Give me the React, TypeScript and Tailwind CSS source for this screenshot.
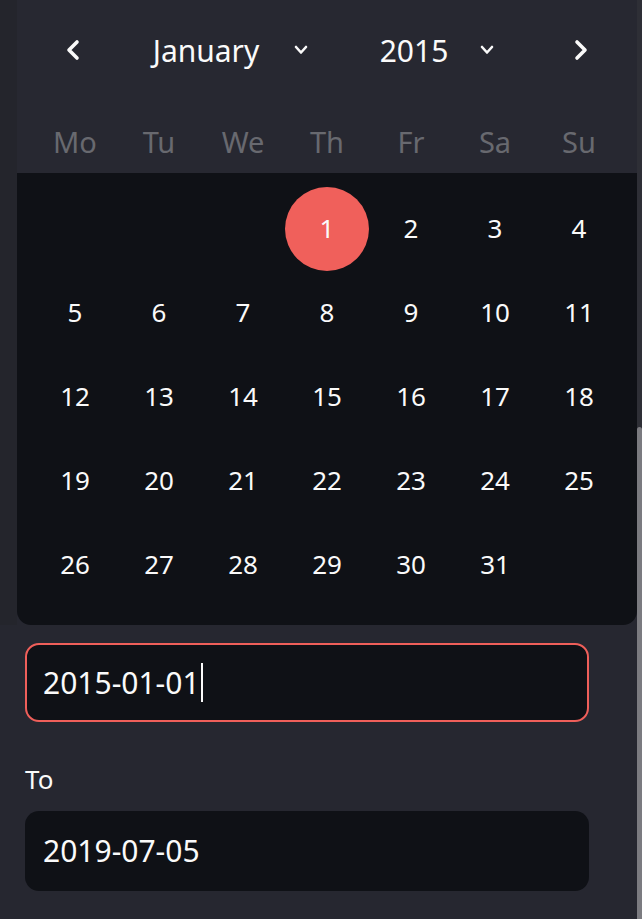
const WEEKDAYS = ["Mo", "Tu", "We", "Th", "Fr", "Sa", "Su"];

// January 2015 starts on a Thursday (Mon-first grid, 3 blanks).
const DAYS: (number | null)[] = [
  null, null, null,
  ...Array.from({ length: 31 }, (_, i) => i + 1),
];

function ChevronSide({ dir }: { dir: "left" | "right" }) {
  return (
    <svg width="14" height="22" viewBox="0 0 14 22" fill="none">
      <polyline
        points={dir === "left" ? "11,3 3,11 11,19" : "3,3 11,11 3,19"}
        stroke="#fafafa"
        strokeWidth="3.6"
        strokeLinecap="round"
        strokeLinejoin="round"
      />
    </svg>
  );
}

function ChevronDown() {
  return (
    <svg width="14" height="10" viewBox="0 0 14 10" fill="none">
      <polyline
        points="2,2 7,7.5 12,2"
        stroke="#fafafa"
        strokeWidth="2.6"
        strokeLinecap="round"
        strokeLinejoin="round"
      />
    </svg>
  );
}

function CalendarHeader() {
  return (
    <div className="bg-[#272831]">
      <div className="flex h-[100px] items-center text-[30px] text-[#fafafa]">
        <div className="flex w-[112px] justify-center">
          <ChevronSide dir="left" />
        </div>
        <div className="w-[154px] text-center">January</div>
        <div className="flex w-[36px] justify-center">
          <ChevronDown />
        </div>
        <div className="ml-[38px] w-[114px] text-center">2015</div>
        <div className="flex w-[32px] justify-center">
          <ChevronDown />
        </div>
        <div className="ml-[22px] flex w-[112px] justify-center">
          <ChevronSide dir="right" />
        </div>
      </div>
      <div className="grid h-[73px] grid-cols-7 px-4 pt-[9px]">
        {WEEKDAYS.map((d) => (
          <div
            key={d}
            className="flex items-center justify-center text-[29px] leading-none text-[#68696f]"
          >
            {d}
          </div>
        ))}
      </div>
    </div>
  );
}

function DayGrid() {
  return (
    <div className="grid grid-cols-7 rounded-b-[14px] bg-[#0f1116] px-4 pt-[14px] pb-[18px]">
      {DAYS.map((d, i) => (
        <div key={i} className="flex h-[84px] items-center justify-center">
          {d !== null && (
            <div
              className={
                d === 1
                  ? "flex h-[84px] w-[84px] items-center justify-center rounded-full bg-[#f0605b] pb-[3px] text-[26px] leading-none text-[#fafafa]"
                  : "pb-[3px] text-[26px] leading-none text-[#fafafa]"
              }
            >
              {d}
            </div>
          )}
        </div>
      ))}
    </div>
  );
}

function DateInput({ value, focused }: { value: string; focused?: boolean }) {
  return (
    <div
      className={
        focused
          ? "flex h-[79px] w-[564px] items-center rounded-[14px] border-2 border-[#ef5f5a] bg-[#0f1116] pl-[16px]"
          : "flex h-[80px] w-[564px] items-center rounded-[14px] bg-[#0f1116] pl-[18px]"
      }
    >
      <span className="text-[30px] leading-none text-[#fafafa]">{value}</span>
      {focused && <span className="ml-[1px] h-[39px] w-[2px] bg-[#fafafa]" />}
    </div>
  );
}

export default function App() {
  return (
    <div
      className="flex h-[919px] w-[642px] overflow-hidden bg-[#262730]"
      style={{ fontFamily: '"Noto Sans", "Open Sans", sans-serif' }}
    >
      <div className="h-[625px] w-[17px] bg-[#24252c]" />
      <div className="flex w-[620px] flex-col">
        <CalendarHeader />
        <DayGrid />
        <div className="ml-2 mt-[18px]">
          <DateInput value="2015-01-01" focused />
        </div>
        <div className="ml-2 mt-[37px] flex h-[40px] items-center text-[26px] leading-none text-[#fafafa]">
          To
        </div>
        <div className="ml-2 mt-[12px]">
          <DateInput value="2019-07-05" />
        </div>
      </div>
      <div className="flex w-[5px] flex-col bg-[#2e2f36]">
        <div className="h-[427px]" />
        <div className="flex-1 rounded-t-[3px] bg-[#7b7b80]" />
      </div>
    </div>
  );
}
